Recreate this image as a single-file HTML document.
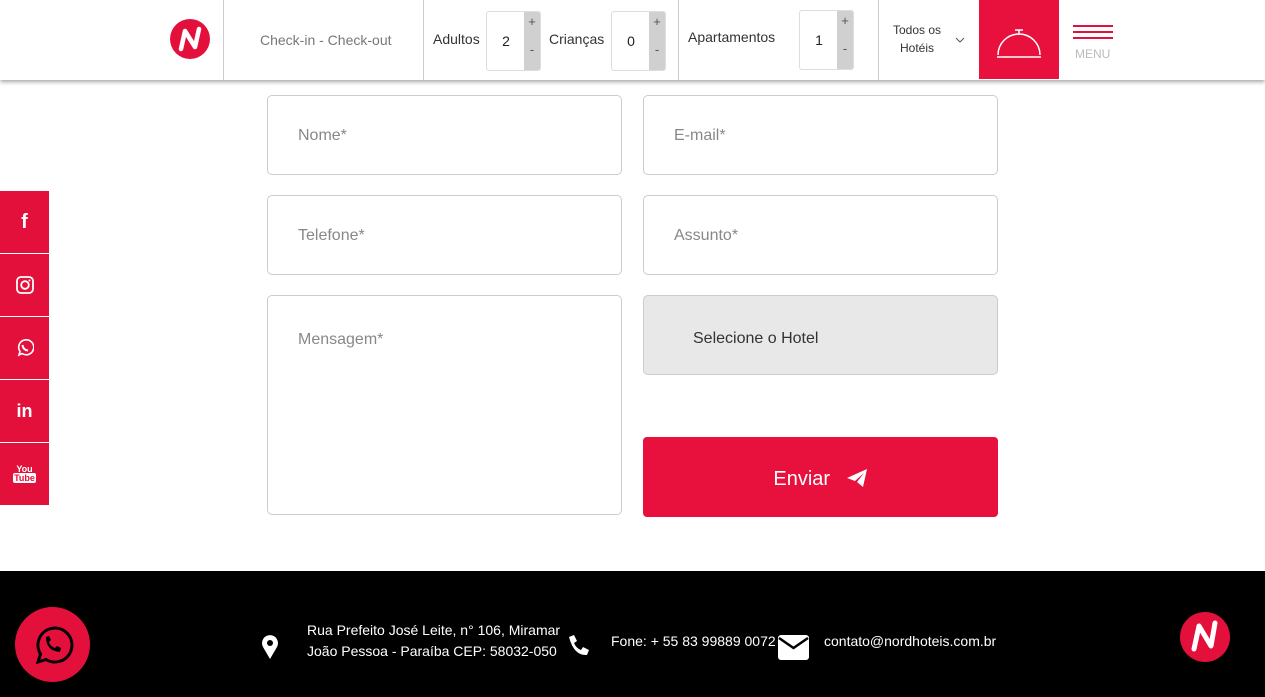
<!DOCTYPE html>
<html><head><meta charset="utf-8">
<style>
*{box-sizing:border-box;margin:0;padding:0}
body{width:1265px;height:697px;overflow:hidden;background:#fff;font-family:"Liberation Sans","DejaVu Sans",sans-serif;position:relative}
.hdr{position:absolute;left:0;top:0;width:1265px;height:80px;background:#fff;box-shadow:0 2px 4px rgba(0,0,0,.35);z-index:5}
.vl{position:absolute;top:0;height:80px;width:1px;background:#ccc}
.t{position:absolute;font-size:14px;color:#333}
.num{position:absolute;top:11px;width:55px;height:60px;border:1px solid #ddd;border-radius:3px;background:#fff;overflow:hidden}
.num .v{position:absolute;left:0;width:38px;top:0;line-height:58px;text-align:center;font-size:14px;color:#222}
.num .b{position:absolute;right:0;top:0;width:16px;height:58px;background:#d0d0d0;color:#555;font-size:13px;text-align:center}
.num .b .p{position:absolute;left:0;width:16px;top:2px}
.num .b .m{position:absolute;left:0;width:16px;top:30px}
.inp{position:absolute;border:1px solid #ccc;border-radius:5px;background:#fff;font-size:16px;color:#888;padding-left:30px}
.soc{position:absolute;left:0;width:49px;height:62px;background:#e4103c;display:flex;align-items:center;justify-content:center}
.ft{position:absolute;left:0;top:571px;width:1265px;height:126px;background:#000}
.w{color:#fff;font-size:14px;position:absolute}
</style></head><body>
<div class="hdr">
  <svg style="position:absolute;left:170px;top:19px" width="40" height="40" viewBox="0 0 40 40"><circle cx="20" cy="20" r="20" fill="#e4103c"/><path d="M11 30 L15 12 L25 28 L29 10" stroke="#fff" stroke-width="4.5" fill="none" stroke-linecap="round" stroke-linejoin="round"/></svg>
  <div class="vl" style="left:223px"></div>
  <div class="t" style="left:260px;top:32px;color:#777">Check-in - Check-out</div>
  <div class="vl" style="left:423px"></div>
  <div class="t" style="left:433px;top:31px">Adultos</div>
  <div class="num" style="left:486px"><div class="v">2</div><div class="b"><span class="p">+</span><span class="m">-</span></div></div>
  <div class="t" style="left:549px;top:31px">Crianças</div>
  <div class="num" style="left:611px"><div class="v">0</div><div class="b"><span class="p">+</span><span class="m">-</span></div></div>
  <div class="vl" style="left:678px"></div>
  <div class="t" style="left:688px;top:29px">Apartamentos</div>
  <div class="num" style="left:799px;top:10px"><div class="v">1</div><div class="b"><span class="p">+</span><span class="m">-</span></div></div>
  <div class="vl" style="left:878px"></div>
  <div class="t" style="left:893px;top:21px;font-size:12px;text-align:center;line-height:18px">Todos os<br>Hotéis</div>
  <svg style="position:absolute;left:955px;top:37px" width="10" height="6"><path d="M1 1 L5 5 L9 1" stroke="#555" fill="none"/></svg>
  <div style="position:absolute;left:979px;top:0;width:80px;height:79px;background:#e8103c">
    <svg width="80" height="79"><path d="M19 55 A21 21 0 0 1 61 55" stroke="#fff" stroke-width="1.5" fill="none"/><path d="M18 57 H62 M40 30 V35 M36 30 H44" stroke="#fff" stroke-width="1.5"/></svg>
  </div>
  <div style="position:absolute;left:1073px;top:25px;width:40px;height:2px;background:#e4103c"></div>
  <div style="position:absolute;left:1073px;top:31px;width:40px;height:2px;background:#e4103c"></div>
  <div style="position:absolute;left:1073px;top:37px;width:40px;height:2px;background:#e4103c"></div>
  <div class="t" style="left:1075px;top:47px;font-size:12px;color:#bbb">MENU</div>
</div>

<div class="inp" style="left:267px;top:95px;width:355px;height:80px;line-height:80px">Nome*</div>
<div class="inp" style="left:643px;top:95px;width:355px;height:80px;line-height:80px">E-mail*</div>
<div class="inp" style="left:267px;top:195px;width:355px;height:80px;line-height:80px">Telefone*</div>
<div class="inp" style="left:643px;top:195px;width:355px;height:80px;line-height:80px">Assunto*</div>
<div class="inp" style="left:267px;top:295px;width:355px;height:220px;padding-top:35px">Mensagem*</div>
<div class="inp" style="left:643px;top:295px;width:355px;height:80px;line-height:86px;background:#e8e8e8;color:#333;padding-left:49px">Selecione o Hotel</div>
<div style="position:absolute;left:643px;top:437px;width:355px;height:80px;background:#e8103c;border-radius:4px;color:#fff;font-size:20px;text-align:center;line-height:84px">Enviar
  <svg style="vertical-align:-3px;margin-left:10px" width="22" height="20" viewBox="0 0 22 20"><path d="M1 10 L21 1 L17 19 L11 14 L18 5 L9 13 Z" fill="#fff"/></svg></div>

<div class="soc" style="top:191px"><span style="color:#fff;font-weight:bold;font-size:20px">f</span></div>
<div class="soc" style="top:254px"><svg width="18" height="18"><rect x="1" y="1" width="16" height="16" rx="4" stroke="#fff" stroke-width="1.8" fill="none"/><circle cx="9" cy="9" r="3.8" stroke="#fff" stroke-width="1.8" fill="none"/><circle cx="13.5" cy="4.5" r="1" fill="#fff"/></svg></div>
<div class="soc" style="top:317px"><svg width="18" height="18"><path d="M3 16 L4 12.5 A7.5 7.5 0 1 1 6 14.5 Z" stroke="#fff" stroke-width="1.6" fill="none"/><path d="M6.5 6 Q7 11 12 11.5" stroke="#fff" stroke-width="2" fill="none"/></svg></div>
<div class="soc" style="top:380px"><span style="color:#fff;font-weight:bold;font-size:18px">in</span></div>
<div class="soc" style="top:443px"><span style="color:#fff;font-weight:bold;font-size:9px;line-height:9px;text-align:center">You<br><span style="background:#fff;color:#e4103c;padding:0 1px;border-radius:2px">Tube</span></span></div>

<div class="ft">
  <div style="position:absolute;left:15px;top:36px;width:75px;height:75px;border-radius:50%;background:#e4103c"></div>
  <svg style="position:absolute;left:32px;top:53px" width="42" height="42" viewBox="0 0 42 42"><path d="M6 38 L8.5 30 A17 17 0 1 1 14 35.5 Z" stroke="#000" stroke-width="3" fill="none"/><path d="M14 13 Q14 27 28 28 L29 24 L25 22 L23 24 Q18 22 17 18 L19 16 L17 12 Z" fill="#000"/></svg>
  <svg style="position:absolute;left:261px;top:63px" width="18" height="26" viewBox="0 0 18 26"><path d="M9 25 L2 13 A8 8 0 1 1 16 13 Z" fill="#fff"/><circle cx="9" cy="9" r="3" fill="#000"/></svg>
  <div class="w" style="left:307px;top:49px;line-height:21px">Rua Prefeito José Leite, n° 106, Miramar<br>João Pessoa - Paraíba CEP: 58032-050</div>
  <svg style="position:absolute;left:566px;top:63px" width="24" height="24" viewBox="0 0 24 24"><path d="M3 3 L8 1 L11 7 L8 9 Q10 14 15 16 L17 13 L23 16 L21 21 Q8 22 3 3 Z" fill="#fff"/></svg>
  <div class="w" style="left:611px;top:62px">Fone: + 55 83 99889 0072</div>
  <svg style="position:absolute;left:778px;top:64px" width="31" height="25" viewBox="0 0 31 25"><rect x="0" y="0" width="31" height="25" rx="3" fill="#fff"/><path d="M1 3 L15.5 13 L30 3" stroke="#000" stroke-width="2.5" fill="none"/></svg>
  <div class="w" style="left:824px;top:62px">contato@nordhoteis.com.br</div>
  <svg style="position:absolute;left:1179px;top:40px" width="52" height="52" viewBox="0 0 52 52"><ellipse cx="26" cy="26" rx="25" ry="25" fill="#e4103c"/><path d="M15 38 L20 15 L32 35 L36 12" stroke="#fff" stroke-width="5" fill="none" stroke-linecap="round" stroke-linejoin="round"/></svg>
</div>
</body></html>
